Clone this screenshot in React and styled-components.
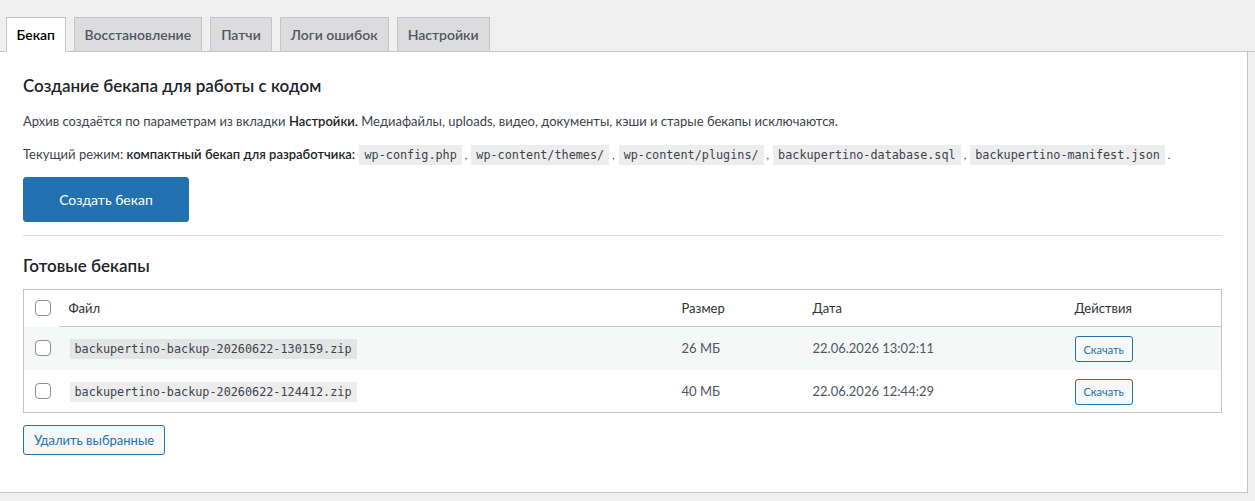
import React from "react";
import styled, { createGlobalStyle } from "styled-components";

const GlobalStyle = createGlobalStyle`
  html, body {
    margin: 0;
    padding: 0;
    background: #f0f0f1;
    font-family: Lato, "Open Sans", sans-serif;
    color: #3c434a;
    font-size: 13px;
  }
  * { box-sizing: border-box; }
`;

const tabs = ["Бекап", "Восстановление", "Патчи", "Логи ошибок", "Настройки"];

const paths = [
  "wp-config.php",
  "wp-content/themes/",
  "wp-content/plugins/",
  "backupertino-database.sql",
  "backupertino-manifest.json",
];

const backups = [
  { file: "backupertino-backup-20260622-130159.zip", size: "26 МБ", date: "22.06.2026 13:02:11" },
  { file: "backupertino-backup-20260622-124412.zip", size: "40 МБ", date: "22.06.2026 12:44:29" },
];

function App() {
  return (
    <Page>
      <GlobalStyle />
      <TabBar>
        {tabs.map((t, i) => (
          <Tab key={t} active={i === 0}>{t}</Tab>
        ))}
      </TabBar>
      <Panel>
        <Title>Создание бекапа для работы с кодом</Title>
        <Text>
          Архив создаётся по параметрам из вкладки <b>Настройки.</b> Медиафайлы, uploads, видео, документы, кэши и старые бекапы исключаются.
        </Text>
        <Text>
          Текущий режим: <b>компактный бекап для разработчика:</b>{" "}
          {paths.map((p, i) => (
            <React.Fragment key={p}>
              <Code>{p}</Code>
              <Sep>{i < paths.length - 1 ? "," : "."}</Sep>
            </React.Fragment>
          ))}
        </Text>
        <PrimaryButton>Создать бекап</PrimaryButton>
        <Divider />
        <Title>Готовые бекапы</Title>
        <Table>
          <colgroup>
            <col style={{ width: 35 }} />
            <col style={{ width: 613 }} />
            <col style={{ width: 131 }} />
            <col style={{ width: 262 }} />
            <col />
          </colgroup>
          <thead>
            <tr>
              <CheckCell as="th"><Checkbox type="checkbox" /></CheckCell>
              <Th>Файл</Th>
              <Th>Размер</Th>
              <Th>Дата</Th>
              <Th>Действия</Th>
            </tr>
          </thead>
          <tbody>
            {backups.map((b, i) => (
              <Row key={b.file} striped={i % 2 === 0}>
                <CheckCell><Checkbox type="checkbox" /></CheckCell>
                <Td><Code>{b.file}</Code></Td>
                <Td>{b.size}</Td>
                <Td>{b.date}</Td>
                <Td><SmallButton>Скачать</SmallButton></Td>
              </Row>
            ))}
          </tbody>
        </Table>
        <SecondaryButton>Удалить выбранные</SecondaryButton>
      </Panel>
    </Page>
  );
}

export default App;

const Page = styled.div`
  width: 1255px;
  min-height: 501px;
  background: #f0f0f1;
`;

const TabBar = styled.div`
  display: flex;
  gap: 8px;
  padding: 17px 0 0 6px;
  border-bottom: 1px solid #c3c4c7;
  height: 52px;
`;

const Tab = styled.div`
  padding: 0 ${(p) => (p.active ? "9.5px" : "10px")};
  display: flex;
  align-items: center;
  font-size: 14px;
  font-weight: 600;
  border: 1px solid #c3c4c7;
  border-bottom: ${(p) => (p.active ? "1px solid #fff" : "none")};
  background: ${(p) => (p.active ? "#fff" : "#dcdcde")};
  color: ${(p) => (p.active ? "#000" : "#50575e")};
  margin-bottom: ${(p) => (p.active ? "-1px" : "0")};
  height: ${(p) => (p.active ? "35px" : "34px")};
`;

const Panel = styled.div`
  width: 1248px;
  height: 441px;
  background: #fff;
  border-right: 1px solid #c3c4c7;
  border-bottom: 1px solid #c3c4c7;
  padding: 22px 25px 0 23px;
`;

const Title = styled.h2`
  margin: 0 0 13px;
  font-size: 17px;
  font-weight: 600;
  color: #1d2327;
  line-height: 24px;
`;

const Text = styled.p`
  margin: 0 0 13px;
  font-size: 13px;
  line-height: 20px;
  color: #3c434a;
  b { font-weight: 600; color: #1d2327; }
`;

const Code = styled.code`
  font-family: "DejaVu Sans Mono", "Liberation Mono", monospace;
  font-size: 11.8px;
  background: rgba(0, 0, 0, 0.07);
  color: #3c434a;
  padding: 3px 5px 3px;
  margin: 0 1px;
`;

const Sep = styled.span`
  margin: 0 3px 0 2px;
  font-size: 11px;
`;

const PrimaryButton = styled.button`
  display: block;
  width: 166px;
  height: 45px;
  margin-top: -1px;
  background: #2271b1;
  border: 1px solid #2271b1;
  border-radius: 3px;
  color: #fff;
  font-family: inherit;
  font-size: 14px;
`;

const Divider = styled.hr`
  border: 0;
  border-top: 1px solid #dcdcde;
  margin: 13px 0 18px;
`;

const Table = styled.table`
  width: 100%;
  table-layout: fixed;
  border-collapse: collapse;
  border: 1px solid #c3c4c7;
  margin-top: -2px;
`;

const Th = styled.th`
  text-align: left;
  font-weight: 400;
  font-size: 13px;
  color: #2c3338;
  height: 37px;
  padding: 0 10px;
  border-bottom: 1px solid #c3c4c7;
`;

const Row = styled.tr`
  background: ${(p) => (p.striped ? "#f6f7f7" : "#fff")};
`;

const Td = styled.td`
  font-size: 13px;
  color: #50575e;
  height: 43px;
  padding: 0 10px;
  vertical-align: middle;
`;

const CheckCell = styled.td`
  padding: 0 0 0 11px;
  vertical-align: middle;
  border-bottom: inherit;
`;

const Checkbox = styled.input`
  appearance: none;
  display: block;
  width: 16px;
  height: 16px;
  margin: 0;
  border: 1px solid #8c8f94;
  border-radius: 4px;
  background: #fff;
`;

const SmallButton = styled.button`
  height: 26px;
  padding: 0 8px;
  font-family: inherit;
  font-size: 11px;
  color: #2271b1;
  background: #f6f7f7;
  border: 1px solid #2271b1;
  border-radius: 3px;
  margin-top: 2px;
`;

const SecondaryButton = styled.button`
  display: block;
  height: 30px;
  margin-top: 12px;
  padding: 0 10px;
  font-family: inherit;
  font-size: 13px;
  color: #2271b1;
  background: #f6f7f7;
  border: 1px solid #2271b1;
  border-radius: 3px;
`;
